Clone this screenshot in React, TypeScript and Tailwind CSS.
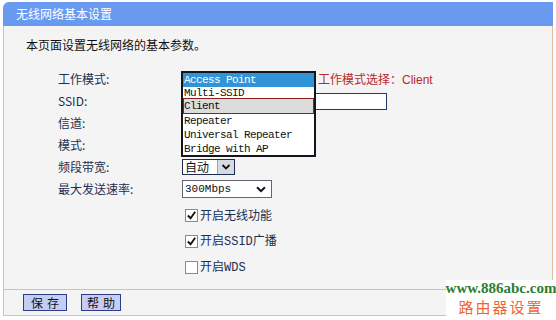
const cjk = { fontFamily: '"Noto Sans CJK SC", "Liberation Sans", sans-serif' };
const mono = { fontFamily: '"Liberation Mono", "DejaVu Sans Mono", monospace' };

const modes = ["Access Point", "Multi-SSID", "Client", "Repeater", "Universal Repeater", "Bridge with AP"];

function Chevron({ className }: { className?: string }) {
  return (
    <svg viewBox="0 0 10 8" className={className}>
      <path d="M1.5 2 L5 5.5 L8.5 2" fill="none" stroke="#111" strokeWidth="1.8" />
    </svg>
  );
}

function Check({ checked, label }: { checked: boolean; label: React.ReactNode }) {
  return (
    <div className="flex items-center h-[26px] pl-[3px]">
      <div className="w-[13px] h-[13px] border border-[#8a8a8a] bg-white flex items-center justify-center">
        {checked && (
          <svg viewBox="0 0 12 12" className="w-[11px] h-[11px]">
            <path d="M2 6 L5 9 L10 2" fill="none" stroke="#111" strokeWidth="2" />
          </svg>
        )}
      </div>
      <span className="ml-[2px] text-[12px] leading-[14px] text-[#1b2f52]">{label}</span>
    </div>
  );
}

export default function App() {
  const rows = ["工作模式:", "SSID:", "信道:", "模式:", "频段带宽:", "最大发送速率:"];

  return (
    <div className="relative w-[556px] h-[320px] bg-white overflow-hidden" style={cjk}>
      <div className="ml-[3px] mt-[2px] w-[550px]">
        <div className="h-[24px] bg-[#6a9af0] rounded-tl-[6px] pl-[13px] text-white text-[12px] leading-[24px]">
          无线网络基本设置
        </div>
        <div className="border-l border-r border-b border-[#dcc29a] bg-[#f4f4f4]">
          <div className="pt-[12px] pl-[22px] text-[12px] leading-[14px] text-[#111]">
            本页面设置无线网络的基本参数。
          </div>

          <div className="mt-[16px] pl-[54px]">
            {rows.map((label, i) => (
              <div key={label} className="flex items-center h-[22px]">
                <div className="w-[124px] text-[12px] text-[#1b2f52] leading-[14px]">{label}</div>
                {i === 0 && (
                  <div className="pl-[136px] text-[12px] text-[#b8282c] leading-[14px]">
                    工作模式选择：<span style={{ fontFamily: '"Liberation Sans", sans-serif' }}>Client</span>
                  </div>
                )}
                {i === 1 && <div className="w-[205px] h-[17px] border border-[#1f3b6e] bg-white" />}
                {i === 4 && (
                  <div className="w-[53px] h-[16px] border border-[#1c2c4c] bg-white flex items-center justify-between">
                    <span className="pl-[2px] text-[12px] leading-[14px] text-[#111]">自动</span>
                    <div className="w-[17px] h-[14px] bg-[#d6dae2] border-l border-[#9aa4b4] flex items-center justify-center">
                      <Chevron className="w-[10px] h-[8px]" />
                    </div>
                  </div>
                )}
                {i === 5 && (
                  <div className="w-[90px] h-[18px] border border-[#5f6774] bg-white flex items-center justify-between px-[2px]">
                    <span className="text-[11px] leading-[14px] text-[#111]" style={mono}>300Mbps</span>
                    <Chevron className="w-[12px] h-[9px] mr-[2px]" />
                  </div>
                )}
              </div>
            ))}
            <div className="mt-[2px] pl-[124px]">
              <Check checked label="开启无线功能" />
              <Check checked label={<>开启<span style={mono}>SSID</span>广播</>} />
              <Check checked={false} label={<>开启<span style={mono}>WDS</span></>} />
            </div>
          </div>

          <div className="mt-[9px] border-t border-[#dcc29a] h-[26px] flex items-center pl-[19px] gap-[14px]">
            <button className="w-[44px] h-[17px] bg-[#c6cdf5] border border-[#2c3e8a] text-[12px] leading-[15px] text-[#111] tracking-[4px] pl-[4px]">
              保存
            </button>
            <button className="w-[40px] h-[17px] bg-[#c6cdf5] border border-[#2c3e8a] text-[12px] leading-[15px] text-[#111] tracking-[4px] pl-[4px]">
              帮助
            </button>
          </div>
        </div>
      </div>

      <div className="absolute left-[181px] top-[71px] w-[135px] h-[86px] border-2 border-[#15151f] bg-white" style={mono}>
        {modes.map((m, i) => (
          <div
            key={m}
            className={
              i === 0
                ? "h-[14px] bg-[#3194d8] text-white text-[11px] tracking-[-0.6px] leading-[14px] pl-[1px]"
                : i === 1
                ? "h-[11px] overflow-hidden text-[#111] text-[11px] tracking-[-0.6px] leading-[13px] pl-[1px]"
                : i === 2
                ? "h-[16px] bg-[#dcdcdc] border border-[#8b2020] text-[#111] text-[11px] tracking-[-0.6px] leading-[14px]"
                : "h-[14px] text-[#111] text-[11px] tracking-[-0.6px] leading-[14px] pl-[1px]"
            }
          >
            {m}
          </div>
        ))}
      </div>

      <div className="absolute right-0 bottom-0 w-[110px] h-[40px] bg-white flex flex-col items-center gap-[2px] pt-[1px]">
        <div className="text-[15px] leading-[15px] font-bold text-[#2e7d32]" style={{ fontFamily: '"Liberation Serif", serif' }}>
          www.886abc.com
        </div>
        <div className="text-[15px] leading-[18px] text-[#ee6633] tracking-[2px]">路由器设置</div>
      </div>
    </div>
  );
}
